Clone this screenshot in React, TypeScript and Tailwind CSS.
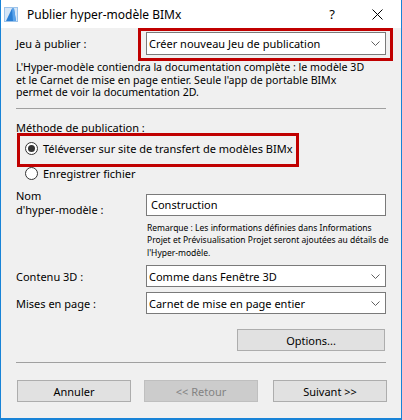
function Combo({ value, h = 'h-[22px]' }: { value: string; h?: string }) {
  return (
    <div className={'flex w-[240px] items-center justify-between border border-[#7a7a7a] bg-white pl-[2px] pr-[5px] ' + h}>
      <span>{value}</span>
      <svg width="9" height="5" viewBox="0 0 9 5" className="shrink-0">
        <path d="M0.5 0.5 L4.5 4.5 L8.5 0.5" fill="none" stroke="#606060" strokeWidth="1" />
      </svg>
    </div>
  )
}

function Radio({ checked, label }: { checked?: boolean; label: string }) {
  return (
    <div className="flex h-[16px] items-center gap-[5px] pl-[9px]">
      <span className="flex h-[13px] w-[13px] items-center justify-center rounded-full border border-[#333] bg-white">
        {checked && <span className="h-[7px] w-[7px] rounded-full bg-[#333]" />}
      </span>
      <span>{label}</span>
    </div>
  )
}

function Button({ label, disabled, className }: { label: string; disabled?: boolean; className?: string }) {
  return (
    <div
      className={
        'flex h-[22px] items-center justify-center border ' +
        (disabled ? 'border-[#bfbfbf] bg-[#cccccc] text-[#838383] ' : 'border-[#adadad] bg-[#e1e1e1] text-black ') +
        (className ?? '')
      }
    >
      {label}
    </div>
  )
}

export default function App() {
  return (
    <div className="flex h-[420px] w-[402px] flex-col border-x border-b-2 border-[#1883d7] bg-[#f0f0f0] font-['Noto_Sans',sans-serif] text-[11px] leading-[15px] text-black">
      {/* title bar */}
      <div className="flex h-[28px] shrink-0 items-center bg-white">
        <svg width="14" height="15" viewBox="0 0 14 15" className="ml-[3px]">
          <rect x="0.5" y="0.5" width="13" height="14" fill="#d6e6f7" stroke="#9cc3ea" />
          <path d="M2 14 L8 1.5 L10 1.5 L12 14 Z" fill="#2b7fd4" />
          <path d="M8 1.5 L10 1.5 L12 14 L9 14 Z" fill="#5aa3ea" />
        </svg>
        <span className="ml-[9px] text-[12px]">Publier hyper-modèle BIMx</span>
        <span className="ml-auto mr-[37px] text-[13px]">?</span>
        <svg width="11" height="11" viewBox="0 0 11 11" className="mr-[18px]">
          <path d="M0.5 0.5 L10.5 10.5 M10.5 0.5 L0.5 10.5" stroke="#000" strokeWidth="1" />
        </svg>
      </div>

      <div className="flex flex-col pl-[15px] pr-[15px]">
        {/* Jeu à publier */}
        <div className="mt-[4px] flex items-center">
          <span className="w-[130px]">Jeu à publier :</span>
          <div className="relative">
            <Combo value="Créer nouveau Jeu de publication" h="h-[23px]" />
            <div className="absolute -bottom-[6px] -left-[8px] -right-[7px] -top-[4px] border-[3px] border-[#c00000]" />
          </div>
        </div>

        <p className="mt-[6px] whitespace-nowrap text-[10.6px] leading-[12.5px]">
          L'Hyper-modèle contiendra la documentation complète : le modèle 3D
          <br />
          et le Carnet de mise en page entier. Seule l'app de portable BIMx
          <br />
          permet de voir la documentation 2D.
        </p>

        <div className="mt-[9px] h-px w-[370px] bg-[#a0a0a0]" />

        <div className="mt-[12px] leading-[13px]">Méthode de publication :</div>

        <div className="relative mt-[7px]">
          <Radio checked label="Téléverser sur site de transfert de modèles BIMx" />
          <div className="absolute left-[1px] top-[-8px] h-[34px] w-[282px] border-[3px] border-[#c00000]" />
        </div>
        <div className="mt-[9px]">
          <Radio label="Enregistrer fichier" />
        </div>

        {/* Nom */}
        <div className="mt-[7px] flex items-start">
          <span className="flex w-[130px] flex-col leading-[14px]">
            <span>Nom</span>
            <span>d'hyper-modèle :</span>
          </span>
          <div className="mt-[5px] flex h-[22px] w-[240px] items-center border border-[#7a7a7a] bg-white pl-[4px]">
            Construction
          </div>
        </div>

        <p className="ml-[131px] mt-[5px] whitespace-nowrap text-[8.5px] leading-[12.5px]">
          Remarque : Les informations définies dans Informations
          <br />
          Projet et Prévisualisation Projet seront ajoutées au détails de
          <br />
          l'Hyper-modèle.
        </p>

        <div className="mt-[6px] flex items-center">
          <span className="w-[130px]">Contenu 3D :</span>
          <Combo value="Comme dans Fenêtre 3D" />
        </div>
        <div className="mt-[5px] flex items-center">
          <span className="w-[130px]">Mises en page :</span>
          <Combo value="Carnet de mise en page entier" />
        </div>

        <div className="mt-[15px] flex justify-end">
          <Button label="Options..." className="mr-[1px] w-[148px]" />
        </div>

        <div className="mt-[11px] h-px w-[370px] bg-[#a0a0a0]" />

        <div className="mt-[17px] flex">
          <Button label="Annuler" className="ml-[1px] w-[114px] shrink-0" />
          <Button label="<< Retour" disabled className="ml-[13px] w-[114px] shrink-0" />
          <Button label="Suivant >>" className="ml-[15px] w-[114px] shrink-0" />
        </div>
      </div>
    </div>
  )
}
